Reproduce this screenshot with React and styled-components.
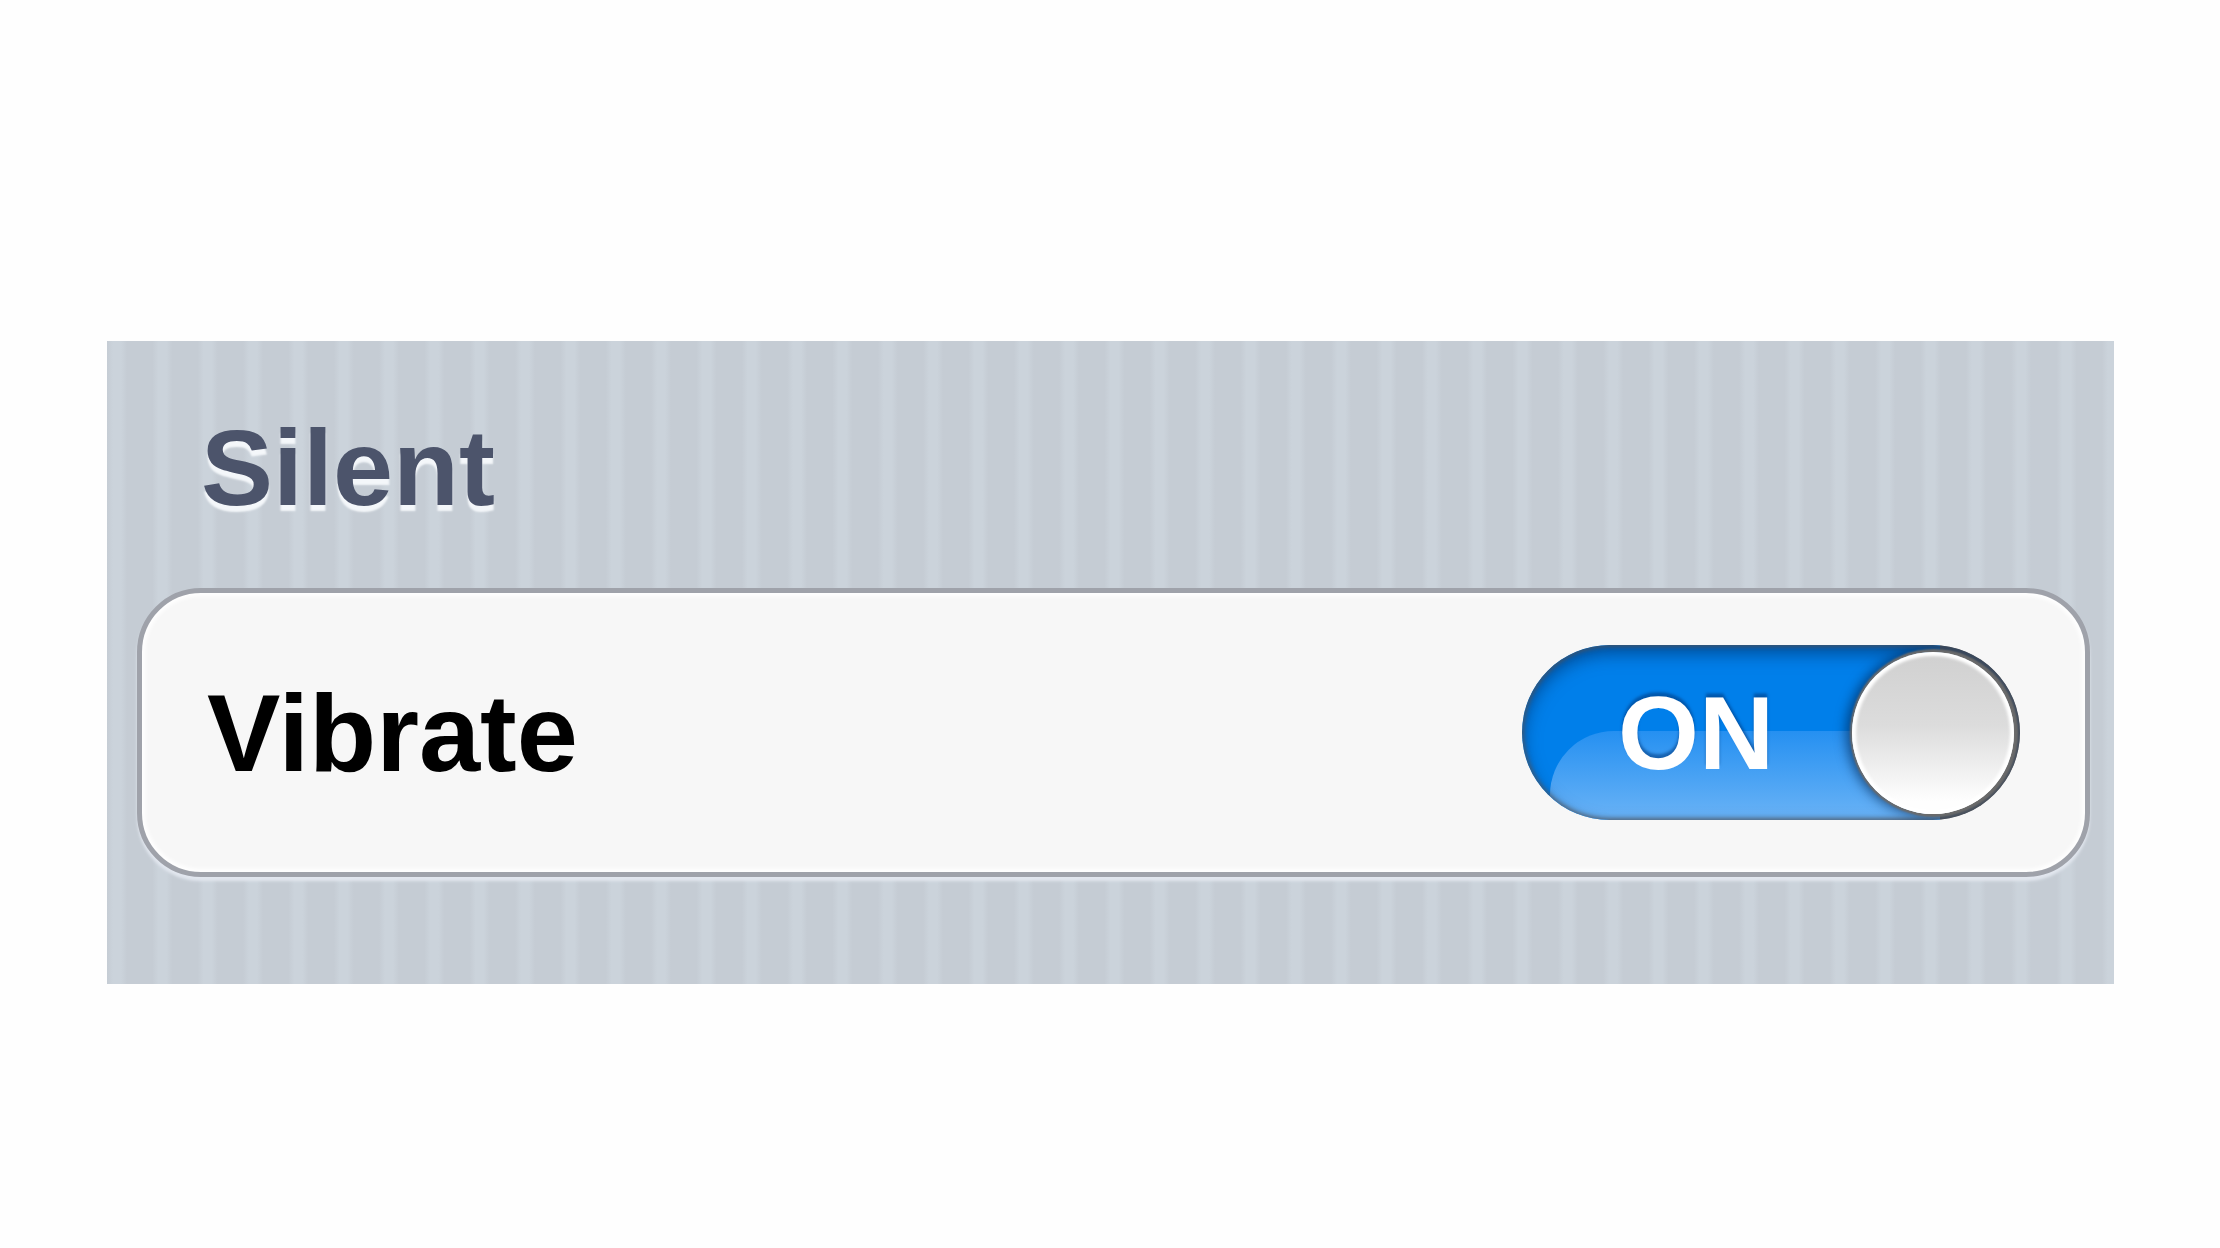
import React, { useState } from "react";
import styled, { createGlobalStyle } from "styled-components";

const GlobalStyle = createGlobalStyle`
  *, *::before, *::after { box-sizing: border-box; }
  body {
    margin: 0;
    background: #fefefe;
    font-family: "Liberation Sans", Arial, Helvetica, sans-serif;
    font-weight: bold;
  }
`;

const Page = styled.main`
  padding: 341px 106px 263px 107px;
`;

const Panel = styled.section`
  padding: 65px 24px 107px 30px;
  background: #c5ccd4 repeating-linear-gradient(
    90deg,
    #c5ccd4 0%,
    #cbd3db 0.3%,
    #cbd3db 0.7%,
    #c5ccd4 1%,
    #c5ccd4 2.259%
  );
`;

const Heading = styled.h1`
  margin: 0 0 58px;
  padding-left: 64px;
  font-size: 108px;
  line-height: 124px;
  color: #4c546b;
  text-shadow: 0 6px 2px #f4f7fa;
`;

const Card = styled.div`
  display: flex;
  align-items: center;
  justify-content: space-between;
  padding: 52px 65px;
  border: 5px solid #9fa2aa;
  border-radius: 64px;
  background: #f7f7f7;
  box-shadow: 0 4px 3px #e2e7ef, inset 0 0 4px 3px #ffffff;
`;

const Label = styled.label`
  font-size: 110px;
  line-height: 124px;
  color: #000;
`;

const Switch = styled.label`
  position: relative;
  display: flex;
  align-items: center;
  justify-content: space-between;
  width: 498px;
  height: 175px;
  padding: 0 6px 0 96px;
  border-radius: 88px;
  overflow: hidden;
  background: linear-gradient(90deg, #007fea 84%, #6b6b6b 84%);
  cursor: pointer;

  &::before {
    content: "";
    position: absolute;
    inset: 86px 80px -50px 28px;
    border-radius: 64px 0 0 0;
    background: linear-gradient(#2590f1, #68b2f6 86px);
  }

  &::after {
    content: "";
    position: absolute;
    inset: 0;
    border-radius: inherit;
    box-shadow: inset 0 0 4px 2px rgba(80, 85, 95, 0.75), inset 0 8px 18px rgba(0, 40, 90, 0.6);
  }
`;

const Input = styled.input`
  position: absolute;
  inset: 0;
  width: 100%;
  height: 100%;
  margin: 0;
  opacity: 0;
  cursor: pointer;
  z-index: 2;
`;

const State = styled.span`
  position: relative;
  font-size: 104px;
  line-height: 124px;
  color: #fff;
  text-shadow: 0 -4px 3px rgba(0, 60, 130, 0.6);
`;

const Knob = styled.span`
  position: relative;
  z-index: 1;
  width: 162px;
  height: 162px;
  border-radius: 50%;
  background: linear-gradient(#d0d0d0, #dcdcdc 45%, #fefefe 92%);
  box-shadow: inset 0 0 3px 4px #fff, 1px 0 2px 3px #6b6b6b, -3px 0 12px 3px rgba(0, 30, 70, 0.6);
`;

export default function App() {
  const [on, setOn] = useState(true);
  return (
    <>
      <GlobalStyle />
      <Page>
        <Panel>
          <Heading>Silent</Heading>
          <Card>
            <Label htmlFor="vibrate">Vibrate</Label>
            <Switch>
              <Input
                id="vibrate"
                type="checkbox"
                role="switch"
                checked={on}
                onChange={(event) => setOn(event.target.checked)}
              />
              <State>{on ? "ON" : "OFF"}</State>
              <Knob />
            </Switch>
          </Card>
        </Panel>
      </Page>
    </>
  );
}
